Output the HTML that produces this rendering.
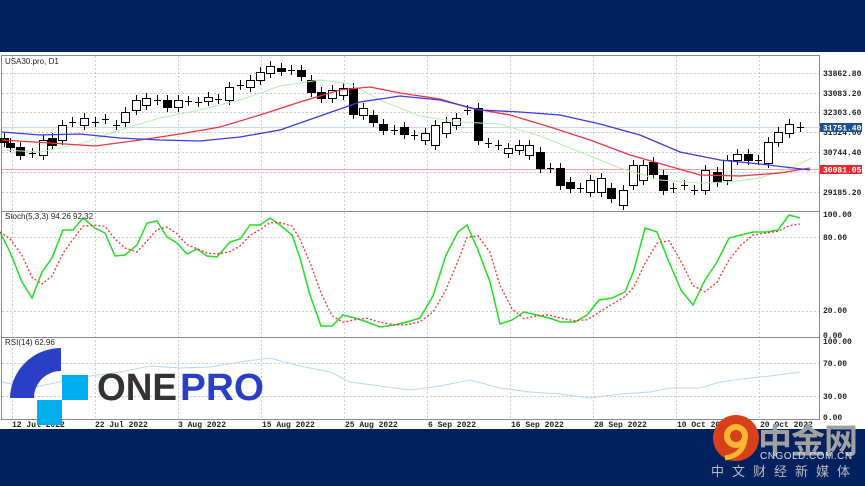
<!DOCTYPE html>
<html><head><meta charset="utf-8"><style>
body{margin:0;width:865px;height:486px;background:#03205f;overflow:hidden;position:relative;font-family:"Liberation Sans",sans-serif}
#w{position:absolute;left:0;top:52px;width:865px;height:377px;background:#fff}
svg{position:absolute;left:0;top:0}
.ax{font:bold 8px "Liberation Mono",monospace;fill:#222}
.cj{position:absolute;font-family:"Liberation Sans","Noto Sans CJK SC",sans-serif}
</style></head><body>
<div id="w"></div>
<svg id="s" width="865" height="486" viewBox="0 0 865 486">
<g stroke="#bbb" stroke-dasharray="2,2" stroke-width="0.7" id="grid"></g>
<rect x="1.5" y="55.5" width="818" height="364" fill="none" stroke="#888"/>
<line x1="1" y1="211.5" x2="820" y2="211.5" stroke="#888"/>
<line x1="1" y1="337.5" x2="820" y2="337.5" stroke="#888"/>
<line x1="2" y1="127.5" x2="820" y2="127.5" stroke="#c9d9ea"/>
<line x1="2" y1="169.5" x2="820" y2="169.5" stroke="#f4a0a0"/>
<g id="c"></g>
<polyline id="ma1" fill="none" stroke="#b6f0b0" stroke-width="1"/>
<polyline id="ma2" fill="none" stroke="#ee3344" stroke-width="1.3"/>
<polyline id="ma3" fill="none" stroke="#3a3ae0" stroke-width="1.3"/>
<polyline id="st1" fill="none" stroke="#22dd22" stroke-width="1.5"/>
<polyline id="st2" fill="none" stroke="#ee3333" stroke-width="1.3" stroke-dasharray="2,2"/>
<polyline id="rsi" fill="none" stroke="#b5d8f5" stroke-width="1"/>
<text x="5" y="64" class="ax" style="font-weight:normal;font-family:'Liberation Sans';font-size:8px">USA30.pro, D1</text>
<text x="5" y="219" class="ax" style="font-weight:normal;font-family:'Liberation Sans';font-size:8px">Stoch(5,3,3) 94.26 92.32</text>
<text x="5" y="345" class="ax" style="font-weight:normal;font-family:'Liberation Sans';font-size:8px">RSI(14) 62.96</text>
<text x="823" y="76" class="ax">33862.80</text>
<text x="823" y="96" class="ax">33083.20</text>
<text x="823" y="115" class="ax">32303.60</text>
<text x="823" y="135" class="ax">31524.00</text>
<text x="823" y="155" class="ax">30744.40</text>
<text x="823" y="195" class="ax">29185.20</text>
<rect x="820" y="123" width="42" height="9" fill="#1e4f8f"/>
<text x="823" y="130.5" class="ax" fill="#fff" style="fill:#fff">31751.40</text>
<rect x="820" y="165" width="42" height="9" fill="#e8282f"/>
<text x="823" y="172.5" class="ax" style="fill:#fff">30081.05</text>
<text x="823" y="217" class="ax">100.00</text>
<text x="823" y="240" class="ax">80.00</text>
<text x="823" y="313" class="ax">20.00</text>
<text x="823" y="338" class="ax">0.00</text>
<text x="823" y="344" class="ax">100.00</text>
<text x="823" y="366" class="ax">70.00</text>
<text x="823" y="399" class="ax">30.00</text>
<text x="823" y="420" class="ax">0.00</text>
<g class="ax">
<text x="12" y="427">12 Jul 2022</text><text x="95" y="427">22 Jul 2022</text><text x="178" y="427">3 Aug 2022</text><text x="262" y="427">15 Aug 2022</text><text x="345" y="427">25 Aug 2022</text><text x="428" y="427">6 Sep 2022</text><text x="511" y="427">16 Sep 2022</text><text x="594" y="427">28 Sep 2022</text><text x="677" y="427">10 Oct 2022</text><text x="760" y="427">20 Oct 2022</text>
</g>
<!-- ONEPRO logo -->
<path d="M61 348 L61 371 A27 27 0 0 0 34 398 L10 398 A51 51 0 0 1 61 348 Z" fill="#2b3fc6"/>
<rect x="62" y="375" width="26" height="25" fill="#00aeef"/>
<rect x="37" y="400" width="25" height="25" fill="#00aeef"/>
<text x="97" y="400" font-family="Liberation Sans" font-weight="bold" font-size="38" fill="#333" textLength="80" lengthAdjust="spacingAndGlyphs">ONE</text>
<text x="180" y="400" font-family="Liberation Sans" font-weight="bold" font-size="38" fill="#2b3fc6" textLength="84" lengthAdjust="spacingAndGlyphs">PRO</text>
<!-- cngold -->
<circle cx="736" cy="438" r="23" fill="#d8401c"/>
<circle cx="736" cy="436" r="9" fill="none" stroke="#f7b733" stroke-width="6"/>
<path d="M745 438 Q744 455 725 458" fill="none" stroke="#f7b733" stroke-width="5"/>
</svg>
<div class="cj" style="left:758px;top:414px;font-size:34px;font-weight:bold;color:#a0a0a0;letter-spacing:-1px">中金网</div>
<div class="cj" style="left:760px;top:451px;font-size:10px;color:#ddd;letter-spacing:0.5px">CNGOLD.COM.CN</div>
<div class="cj" style="left:711px;top:461px;font-size:13px;color:#bbb;letter-spacing:8px">中文财经新媒体</div>
<script>
var NS="http://www.w3.org/2000/svg";
function el(t,a,p){var e=document.createElementNS(NS,t);for(var k in a)e.setAttribute(k,a[k]);document.getElementById(p).appendChild(e);}
for(var i=0;i<10;i++){var x=12+83*i+.5;el('line',{x1:x,y1:56,x2:x,y2:420},'grid');}
[73,93,112,132,152,172,192,237,311,363,396].forEach(function(y){el('line',{x1:2,y1:y+.5,x2:820,y2:y+.5},'grid');});
var C=[[4,'b',138,142],[10,'b',143,147],[20,'b',147,155],[32,'d',153,153],[43,'w',140,155],[52,'b',138,145],[62,'w',125,140],[72,'d',122,122],[84,'w',118,125],[95,'d',122,122],[105,'d',119,119],[116,'d',125,125],[125,'w',112,122],[136,'w',100,110],[146,'w',98,105],[157,'d',100,100],[167,'b',100,107],[178,'w',100,107],[188,'d',101,101],[198,'d',102,102],[208,'w',97,101],[218,'d',99,99],[229,'w',87,100],[240,'d',85,85],[250,'w',80,87],[260,'w',72,80],[270,'w',66,73],[281,'b',68,71],[291,'d',70,70],[301,'b',70,76],[311,'b',80,92],[321,'b',92,98],[332,'w',90,98],[343,'w',88,95],[353,'b',88,114],[363,'w',108,115],[373,'b',115,122],[383,'b',124,130],[394,'d',130,130],[404,'b',127,134],[414,'d',135,135],[425,'w',133,140],[435,'w',125,145],[446,'w',122,133],[456,'w',118,125],[467,'d',110,110],[478,'b',108,140],[488,'d',143,143],[498,'d',145,145],[508,'w',148,153],[519,'w',145,150],[529,'w',145,155],[540,'b',152,168],[550,'d',168,168],[560,'b',168,185],[570,'b',182,188],[580,'d',188,188],[590,'w',180,192],[601,'w',178,192],[611,'b',188,198],[623,'w',190,205],[633,'w',165,185],[643,'w',165,180],[653,'b',162,174],[663,'b',175,190],[673,'d',188,188],[684,'d',185,185],[694,'d',190,190],[705,'w',170,190],[717,'b',172,182],[727,'w',160,180],[737,'w',154,160],[748,'b',154,160],[758,'d',160,160],[768,'w',142,163],[778,'w',132,142],[789,'w',124,133],[800,'d',127,127]];
C.forEach(function(c){var x=c[0];el('line',{x1:x+.5,y1:c[2]-5,x2:x+.5,y2:c[3]+5,stroke:'#000','stroke-width':1},'c');
if(c[1]=='d')el('line',{x1:x-3,y1:c[2]+.5,x2:x+4,y2:c[2]+.5,stroke:'#000'},'c');
else el('rect',{x:x-3.5,y:c[2]+.5,width:8,height:Math.max(2,c[3]-c[2]),fill:c[1]=='b'?'#000':'#fff',stroke:'#000'},'c');});
function P(id,s){document.getElementById(id).setAttribute('points',s);}
P('ma3',"2,132 40,135 80,134 120,138 160,140 200,141 240,137 280,130 320,116 360,102 400,96 440,100 480,110 520,112 560,115 600,124 640,135 680,152 720,160 760,164 810,170");
P('ma2',"2,140 50,143 95,146 140,140 180,134 220,127 260,115 300,102 340,90 370,87 400,93 440,99 470,108 510,115 550,127 590,140 630,155 665,165 700,175 740,176 780,173 810,168");
P('ma1',"2,150 40,152 80,144 120,130 160,118 200,110 240,100 280,86 320,80 350,84 380,100 420,116 460,122 500,124 540,136 580,152 620,168 660,180 700,183 730,182 760,178 790,168 812,158");
var g=[[0,232],[10,252],[22,282],[32,298],[42,272],[52,258],[63,230],[73,230],[83,218],[95,228],[105,233],[115,256],[125,255],[137,245],[147,223],[157,221],[167,237],[177,243],[187,254],[197,249],[207,256],[217,257],[230,242],[240,239],[250,225],[260,225],[270,218],[280,225],[292,235],[300,258],[310,295],[321,326],[332,326],[343,315],[355,318],[367,322],[380,327],[394,325],[407,322],[420,318],[433,296],[446,255],[458,232],[467,225],[478,250],[490,282],[500,324],[512,320],[524,312],[537,315],[549,318],[561,322],[575,322],[587,315],[599,300],[612,298],[625,292],[634,270],[645,228],[657,232],[669,262],[681,290],[693,305],[705,280],[717,262],[729,238],[741,235],[753,232],[766,232],[778,230],[789,215],[800,218]];
P('st1',g.map(function(p){return p.join(',')}).join(' '));
P('st2',g.map(function(p,i){var a=g[Math.max(0,i-1)],b=g[Math.max(0,i-2)];return (p[0])+','+((p[1]+a[1]+b[1])/3+ (i==g.length-1?3:0)).toFixed(1)}).join(' '));
P('rsi',"2,382 30,388 60,382 90,376 120,372 150,366 180,368 210,367 240,362 270,358 300,366 330,372 350,382 380,386 410,390 440,386 470,380 500,388 530,392 560,394 590,398 620,394 650,392 670,388 700,388 720,382 750,378 770,376 800,372");
</script>
</body></html>
